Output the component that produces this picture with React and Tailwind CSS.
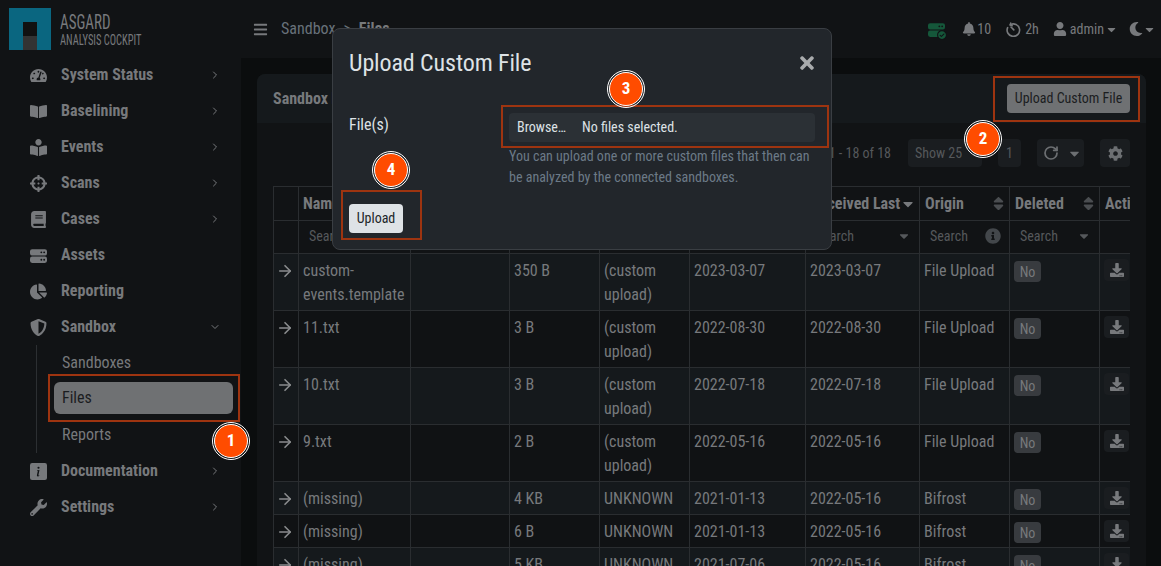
import { ArrowRight, ChevronDown, ChevronRight, RotateCw } from "lucide-react";
import {
  FaBars, FaBell, FaBook, FaBookOpen, FaBookReader, FaCaretDown, FaChartPie, FaCheckCircle, FaCog, FaCrosshairs,
  FaDownload, FaInfoCircle, FaMoon, FaShieldAlt, FaSort, FaTachometerAlt, FaTimes,
  FaUser, FaWrench,
} from "react-icons/fa";
import { BsInfoSquareFill } from "react-icons/bs";

// two-bay rack, the old icon set only has the three-bay one
function RackIcon({ size = 17, className = "" }) {
  return (
    <svg width={size} height={size} viewBox="0 0 24 24" className={className} fill="currentColor">
      <path fillRule="evenodd" d="M3 3h18a3 3 0 0 1 3 3v3a3 3 0 0 1-3 3H3a3 3 0 0 1-3-3V6a3 3 0 0 1 3-3zm13 3.2a1.3 1.3 0 1 0 0 2.6 1.3 1.3 0 0 0 0-2.6zm4 0a1.3 1.3 0 1 0 0 2.6 1.3 1.3 0 0 0 0-2.6z" />
      <path fillRule="evenodd" d="M3 13.5h18a3 3 0 0 1 3 3v3a3 3 0 0 1-3 3H3a3 3 0 0 1-3-3v-3a3 3 0 0 1 3-3zm13 3.2a1.3 1.3 0 1 0 0 2.6 1.3 1.3 0 0 0 0-2.6zm4 0a1.3 1.3 0 1 0 0 2.6 1.3 1.3 0 0 0 0-2.6z" />
    </svg>
  );
}

function TimerIcon({ className = "" }) {
  return (
    <svg width="15" height="15" viewBox="0 0 24 24" className={className} fill="none" stroke="currentColor" strokeWidth="2.6" strokeLinecap="round">
      <path d="M7 4.2A10 10 0 1 1 2.6 9" />
      <path d="M7.5 1.5 6.5 5l3.5 1" strokeWidth="2.2" />
      <path d="M8 8l4.5 4.5" />
    </svg>
  );
}

const topNav = [
  { label: "System Status", icon: FaTachometerAlt },
  { label: "Baselining", icon: FaBookOpen },
  { label: "Events", icon: FaBookReader },
  { label: "Scans", icon: FaCrosshairs },
  { label: "Cases", icon: FaBook },
  { label: "Assets", icon: RackIcon, noArrow: true },
  { label: "Reporting", icon: FaChartPie, noArrow: true },
];

const rows = [
  ["custom-events.template", "350 B", "(custom upload)", "2023-03-07", "2023-03-07", "File Upload", true],
  ["11.txt", "3 B", "(custom upload)", "2022-08-30", "2022-08-30", "File Upload", true],
  ["10.txt", "3 B", "(custom upload)", "2022-07-18", "2022-07-18", "File Upload", true],
  ["9.txt", "2 B", "(custom upload)", "2022-05-16", "2022-05-16", "File Upload", true],
  ["(missing)", "4 KB", "UNKNOWN", "2021-01-13", "2022-05-16", "Bifrost", false],
  ["(missing)", "6 B", "UNKNOWN", "2021-01-13", "2022-05-16", "Bifrost", false],
  ["(missing)", "5 KB", "UNKNOWN", "2021-07-06", "2022-05-16", "Bifrost", false],
];

function NavItem({ label, icon: Icon, noArrow, open }) {
  return (
    <div className="flex h-9 items-center pl-7 pr-[20px]">
      <span className="flex w-[20px] justify-center text-[#77797c]">
        <Icon size={17} />
      </span>
      <span className="ml-[13px] flex-1 font-bold text-[#77797c]">{label}</span>
      {!noArrow && !open && <ChevronRight size={12} className="text-[#77797c]" />}
      {open && <ChevronDown size={12} className="text-[#77797c]" />}
    </div>
  );
}

function Sidebar() {
  return (
    <aside className="w-[241px] shrink-0 bg-[#111315]">
      <div className="flex h-[57px] pl-[9px] pt-2">
        <div className="flex h-[42px] w-[42px] flex-col items-center justify-end bg-[#0a6680]">
          <div className="h-[14px] w-[14px] bg-[#111111]" />
          <div className="h-[14px] w-[14px] bg-[#333333]" />
        </div>
        <div className="ml-[9px] mt-[3px] origin-left scale-x-[0.75] whitespace-nowrap text-[#77797c]">
          <div className="text-[20px] leading-[22px]">ASGARD</div>
          <div className="text-[14px] leading-[15px]">ANALYSIS COCKPIT</div>
        </div>
      </div>
      {topNav.map((item) => (
        <NavItem key={item.label} {...item} />
      ))}
      <NavItem label="Sandbox" icon={FaShieldAlt} open />
      <div className="ml-9 border-l border-[#2c2f32] pl-[17px]">
        <div className="flex h-9 items-center pl-[8px] text-[#77797c]">Sandboxes</div>
        <div className="h-9 pt-px">
          <div className="flex h-[32px] w-[179px] items-center rounded-md bg-[#6f7173] pl-[8px] text-[#1b1d1f]">Files</div>
        </div>
        <div className="flex h-9 items-center pl-[8px] text-[#77797c]">Reports</div>
      </div>
      <NavItem label="Documentation" icon={BsInfoSquareFill} />
      <NavItem label="Settings" icon={FaWrench} />
    </aside>
  );
}

function TopBar() {
  return (
    <header className="flex h-[58px] items-center bg-[#111315] pl-[12px] pr-[5px] text-[#77797c]">
      <FaBars size={15} />
      <span className="ml-[13px] text-[#68717a]">Sandbox</span>
      <span className="mx-[8px] text-[#68717a]">&gt;</span>
      <span className="font-bold">Files</span>
      <div className="ml-auto flex items-center text-[14px]">
        <span className="relative mr-[17px] text-[#15573a]">
          <RackIcon size={17} />
          <span className="absolute -bottom-[2px] -right-[2px] rounded-full bg-[#111315] p-px">
            <FaCheckCircle size={8} />
          </span>
        </span>
        <FaBell size={14} />
        <span className="ml-[1px]">10</span>
        <TimerIcon className="ml-[15px]" />
        <span className="ml-[4px]">2h</span>
        <FaUser size={14} className="ml-[14px]" />
        <span className="ml-[3px]">admin</span>
        <FaCaretDown size={13} className="ml-[1px]" />
        <FaMoon size={14} className="ml-[11px]" />
        <FaCaretDown size={13} />
      </div>
    </header>
  );
}

function HeaderCell({ label, sort, active, nudge }) {
  return (
    <th className={`border border-[#2a2d30] pr-[5px] text-left font-bold text-[#77797c] ${nudge ? "pl-[4px]" : "pl-[5px]"}`}>
      <div className="flex items-center justify-between overflow-hidden whitespace-nowrap">
        <span>{label}</span>
        {sort && <FaSort size={17} className="-mr-[3px] shrink-0 text-[#4a4d50]" />}
        {active && <FaCaretDown size={16} className="shrink-0" />}
      </div>
    </th>
  );
}

function SearchCell({ caret, info }) {
  return (
    <td className="border border-[#2a2d30] pb-[2px] pl-[10px] pr-[8px] text-[14px] text-[#55585b]">
      <div className="flex items-center justify-between">
        <span>Search</span>
        {caret && <FaCaretDown size={14} />}
        {info && <FaInfoCircle size={16} className="text-[#43474b]" />}
      </div>
    </td>
  );
}

function FileTable() {
  const cell = "border border-[#2a2d30] px-[4px] pt-[5px] pb-[3px] align-top leading-[24px]";
  return (
    <div className="overflow-hidden">
      <table className="w-[900px] table-fixed border-collapse text-[#77797c]">
        <colgroup>
          <col className="w-[25px]" />
          <col className="w-[112px]" />
          <col className="w-[99px]" />
          <col className="w-[90px]" />
          <col className="w-[90px]" />
          <col className="w-[116px]" />
          <col className="w-[114px]" />
          <col className="w-[90px]" />
          <col className="w-[90px]" />
          <col className="w-[74px]" />
        </colgroup>
        <thead>
          <tr className="h-[34px]">
            <th className="border border-[#2a2d30]" />
            <HeaderCell label="Name" sort nudge />
            <HeaderCell label="" />
            <HeaderCell label="Size" sort />
            <HeaderCell label="Type" sort />
            <HeaderCell label="Received First" sort />
            <HeaderCell label="Received Last" active />
            <HeaderCell label="Origin" sort />
            <HeaderCell label="Deleted" sort />
            <HeaderCell label="Actions" />
          </tr>
          <tr className="h-[33px]">
            <td className="border border-[#2a2d30]" />
            <SearchCell />
            <SearchCell />
            <SearchCell />
            <SearchCell />
            <SearchCell caret />
            <SearchCell caret />
            <SearchCell info />
            <SearchCell caret />
            <td className="border border-[#2a2d30]" />
          </tr>
        </thead>
        <tbody>
          {rows.map((row, i) => (
            <tr key={i} className={i % 2 === 0 ? "bg-[#15191c]" : "bg-[#101214]"}>
              <td className={cell}>
                <ArrowRight size={18} strokeWidth={2.2} className="mt-[3px] -ml-[2px] text-[#8a8c8e]" />
              </td>
              <td className={cell}>{row[0]}</td>
              <td className={cell} />
              <td className={cell}>{row[1]}</td>
              <td className={cell}>{row[2]}</td>
              <td className={cell}>{row[3]}</td>
              <td className={cell}>{row[4]}</td>
              <td className={cell}>{row[5]}</td>
              <td className={cell}>
                <div className="mt-[2px] flex h-[21px] w-[27px] items-center justify-center rounded bg-[#383b3f] text-[14px]">No</div>
              </td>
              <td className={cell}>
                <div className="flex h-[22px] w-[25px] items-center justify-center rounded bg-[#1a1d20]">
                  <FaDownload size={14} />
                </div>
              </td>
            </tr>
          ))}
        </tbody>
      </table>
    </div>
  );
}

function UploadModal() {
  return (
    <div className="absolute left-[332px] top-[28px] h-[222px] w-[500px] rounded-lg border border-[#3a3e43] bg-[#22262b] text-[#dee2e6]">
      <div className="flex items-center justify-between pl-[16px] pr-[14px] pt-[17px]">
        <h2 className="text-[24px] leading-[34px] tracking-[-0.1px]">Upload Custom File</h2>
        <FaTimes size={20} className="text-[#a9abad]" />
      </div>
      <div className="mt-[16px] flex pl-[16px] pr-[16px]">
        <label className="w-[160px] pt-[17px]">File(s)</label>
        <div className="flex-1">
          <div className="mt-[17px] flex h-[29px] items-center rounded bg-[#2b3035] pl-[8px] text-[14px]">
            <span>Browse…</span>
            <span className="ml-[16px]">No files selected.</span>
          </div>
          <p className="mt-[4px] text-[14px] leading-[21px] text-[#6c7a87]">
            You can upload one or more custom files that then can be analyzed by the connected sandboxes.
          </p>
        </div>
      </div>
      <button className="ml-[16px] mt-[16px] h-[29px] w-[54px] rounded bg-[#dee2e6] text-[14px] text-[#212529]">Upload</button>
    </div>
  );
}

function Marker({ className, children }) {
  return (
    <div className={`absolute z-20 flex h-[34px] w-[34px] items-center justify-center rounded-full border border-white bg-[#ff4c00] text-[17px] font-bold text-white outline-1 outline-offset-1 outline-white ${className}`}>
      {children}
    </div>
  );
}

export default function App() {
  return (
    <div className="relative flex h-screen overflow-hidden bg-[#0b0d0e] font-['Roboto',sans-serif] text-[16px] font-stretch-condensed">
      <Sidebar />
      <main className="min-w-0 flex-1">
        <TopBar />
        <div className="ml-[16px] mr-[15px] mt-[16px] rounded-t-lg bg-[#111315]">
          <div className="flex h-[49px] items-center justify-between rounded-t-lg bg-[#15191c] pl-[16px] pr-[16px]">
            <span className="font-bold text-[#77797c]">Sandbox Files</span>
            <button className="h-[29px] w-[123px] rounded bg-[#6f7173] text-[14px] text-[#1b1d1f]">Upload Custom File</button>
          </div>
          <div className="px-[16px]">
            <div className="flex h-[63px] items-start justify-end pt-[16px] text-[#55585b]">
              <span className="mr-[17px] text-[14px] leading-[28px]">1 - 18 of 18</span>
              <span className="flex h-[28px] w-[74px] items-center rounded bg-[#1a1d20] pl-[7px] text-[14px]">Show 25</span>
              <span className="ml-[16px] flex h-[28px] w-[23px] items-center justify-center rounded bg-[#1a1d20] text-[14px]">1</span>
              <span className="ml-[16px] flex h-[28px] w-[47px] items-center justify-center gap-[8px] rounded bg-[#1a1d20] pl-[3px] text-[#6c6f72]">
                <RotateCw size={16} strokeWidth={2.6} />
                <FaCaretDown size={15} />
              </span>
              <span className="ml-[16px] flex h-[28px] w-[30px] items-center justify-center rounded bg-[#1a1d20] text-[#6c6f72]">
                <FaCog size={15} />
              </span>
            </div>
            <FileTable />
          </div>
        </div>
      </main>

      <UploadModal />

      <div className="absolute left-[48px] top-[374px] h-[48px] w-[192px] border-2 border-[#9e3410]" />
      <div className="absolute left-[993px] top-[76px] h-[46px] w-[147px] border-2 border-[#9e3410]" />
      <div className="absolute left-[501px] top-[105px] h-[43px] w-[328px] border-2 border-[#9e3410]" />
      <div className="absolute left-[341px] top-[190px] h-[50px] w-[81px] border-2 border-[#9e3410]" />
      <Marker className="left-[214px] top-[424px]">1</Marker>
      <Marker className="left-[966px] top-[122px]">2</Marker>
      <Marker className="left-[609px] top-[72px]">3</Marker>
      <Marker className="left-[374px] top-[153px]">4</Marker>
    </div>
  );
}
